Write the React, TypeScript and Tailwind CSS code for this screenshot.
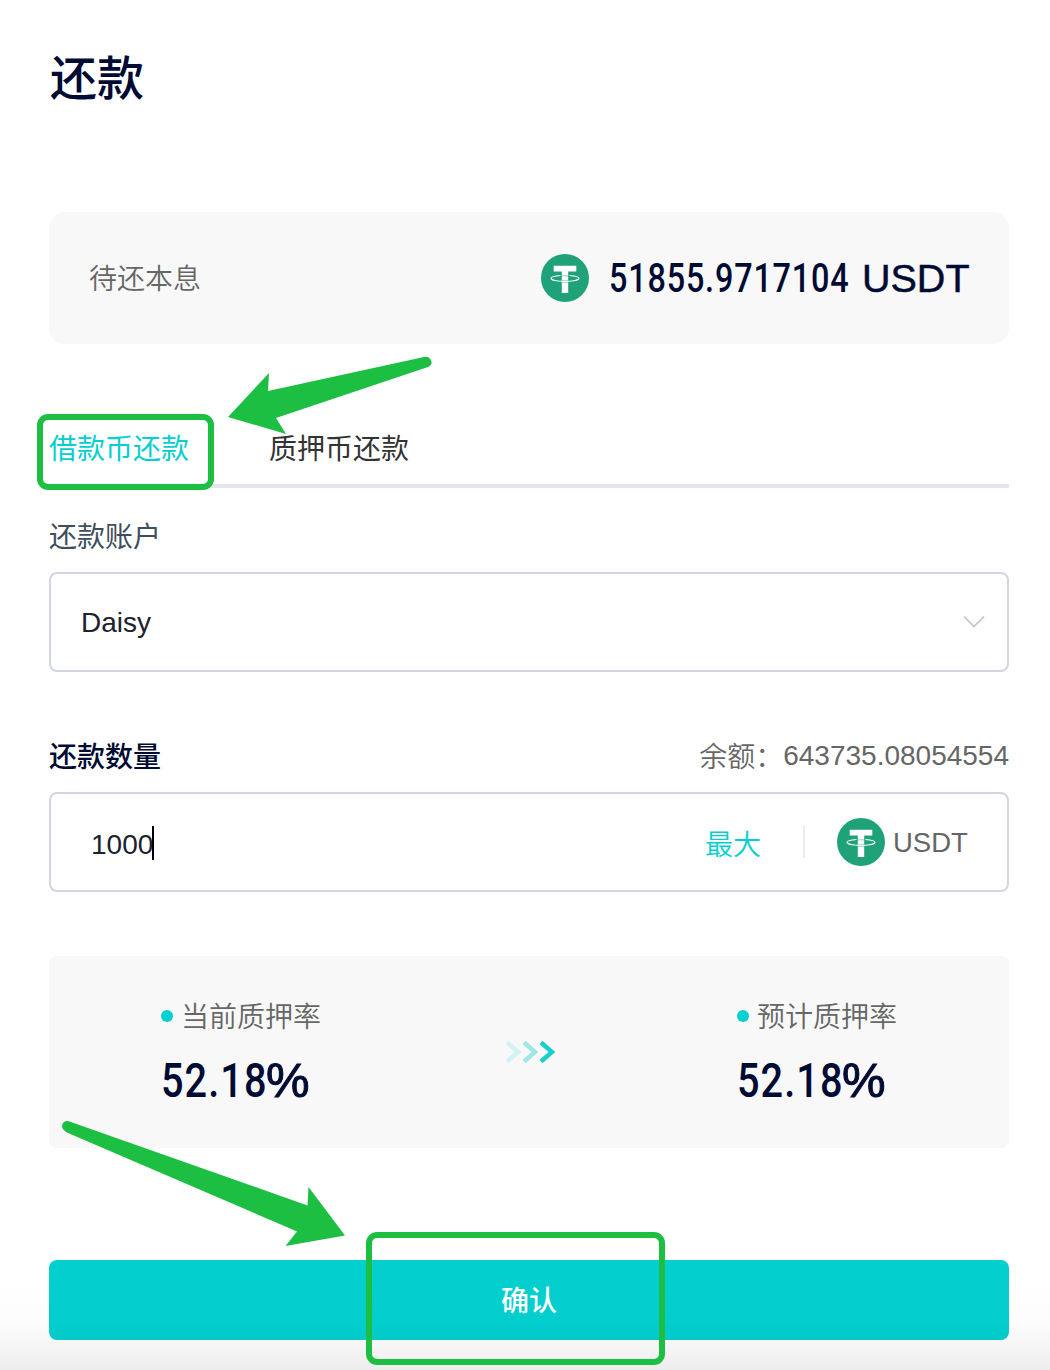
import React from "react";

function TetherIcon() {
  return (
    <svg viewBox="0 0 48 48" className="block size-12 shrink-0">
      <circle cx="24" cy="24" r="24" fill="#1fa27a" />
      <path d="M19.500 21.500C13.800 21.900 10 23 10 24.300C10 26 16.300 27.300 24 27.300C31.700 27.300 38 26 38 24.300C38 23 34.200 21.900 28.500 21.500" fill="none" stroke="#fff" strokeWidth="1.1" />
      <path d="M12.700 11.800H35.300V17.500H27.200V39H20.800V17.500H12.700Z" fill="#fff" />
      <path d="M20.800 22C23 21.700 25 21.700 27.200 22" fill="none" stroke="#1fa27a" strokeWidth="0.5" />
      <path d="M20.800 26.300C23 26.500 25 26.500 27.200 26.300M20.800 28.300C23 28.500 25 28.500 27.200 28.300" fill="none" stroke="#1fa27a" strokeWidth="0.4" />
    </svg>
  );
}

function Rate({ label, value }: { label: string; value: string }) {
  return (
    <div className="w-[200px]">
      <div className="flex h-10 items-center">
        <span className="size-3 rounded-full bg-[#04cfcf]" />
        <span className="ml-2 pt-1 text-[28px] font-[350] leading-10 whitespace-nowrap text-[#666]">{label}</span>
      </div>
      <div className="mt-4 flex h-14 items-center text-[49px] leading-[56px] text-[#000b33]">
        <span className="w-[105px] pt-0.5 font-['Roboto',sans-serif] font-medium">
          <span className="inline-block origin-left scale-x-[0.81] tracking-[1.3px]">{value}</span>
        </span>
        <span className="[-webkit-text-stroke:1px_#000b33]">%</span>
      </div>
    </div>
  );
}

export default function App() {
  return (
    <div className="relative flex h-[1370px] w-[1050px] flex-col overflow-hidden bg-white pr-[41px] pl-[49px] font-['Liberation_Sans','Noto_Sans_CJK_SC',sans-serif] text-[28px] leading-10">
      <h1 className="mt-[46px] h-[66px] pl-px text-[47px] leading-[66px] font-medium text-[#000b33]">还款</h1>

      <section className="mt-[100px] flex h-[132px] items-center rounded-2xl bg-[#f8f8f8] px-10">
        <span className="pt-1 font-[350] text-[#666]">待还本息</span>
        <div className="ml-auto flex items-center text-[40px] text-[#000b33]">
          <TetherIcon />
          <span className="ml-5 w-[253px] pt-0.5 font-['Roboto',sans-serif] text-[40px] font-medium whitespace-nowrap">
            <span className="inline-block origin-left scale-x-[0.81] tracking-[1px]">51855.9717104</span>
          </span>
          <span className="w-[107px] text-[39.5px] [-webkit-text-stroke:0.5px_#000b33]">USDT</span>
        </div>
      </section>

      <nav className="mt-[72px] flex h-[72px] gap-20 border-b-4 border-[#e4e6ee] pt-3.5">
        <span className="text-[#04cfcf]">借款币还款</span>
        <span className="text-[#333]">质押币还款</span>
      </nav>

      <label className="mt-[30px] text-[#404d5c]">还款账户</label>
      <div className="mt-3.5 flex h-[100px] shrink-0 items-center justify-between rounded-lg border-2 border-[#d3d6e1] pr-[22px] pl-[30px] text-[#1b212d]">
        <span className="pt-0.5">Daisy</span>
        <svg viewBox="0 0 22 14" className="h-3.5 w-[22px]" fill="none" stroke="#c0c4cc" strokeWidth="1.7">
          <path d="M1 1.500L11 11.500L21 1.500" />
        </svg>
      </div>

      <div className="mt-16 flex h-10 items-center justify-between">
        <span className="pt-1 font-medium text-[#000b33]">还款数量</span>
        <span className="flex font-[350] text-[#666]">
          <span className="pt-1">余额：</span>
          <span className="pt-0.5">643735.08054554</span>
        </span>
      </div>
      <div className="mt-4 flex h-[100px] shrink-0 items-center rounded-lg border-2 border-[#d3d6e1] pr-10 pl-10 text-[#1b212d]">
        <span className="pt-1.5">1000</span>
        <span className="-ml-px h-[34px] w-0.5 translate-y-px bg-black" />
        <span className="ml-auto pt-2 font-[350] text-[#04cfcf]">最大</span>
        <span className="mr-8 ml-[42px] h-8 w-0.5 bg-[#ededed]" />
        <TetherIcon />
        <span className="ml-2 w-[74px] pt-0.5 text-[27.5px] text-[#666]">USDT</span>
      </div>

      <section className="mt-16 flex h-48 shrink-0 items-start rounded-lg bg-[#f8f8f8] pt-10 pl-28">
        <Rate label="当前质押率" value="52.18" />
        <svg viewBox="0 0 52 24" className="mt-11 ml-[143px] h-6 w-[52px]" fill="none" strokeWidth="4.4">
          <path d="M3 2.500L14 12L3 21.500" stroke="#d3f2f2" />
          <path d="M20 2.500L31 12L20 21.500" stroke="#9ee7e6" />
          <path d="M37 2.500L48 12L37 21.500" stroke="#18cecd" />
        </svg>
        <div className="ml-[181px]">
          <Rate label="预计质押率" value="52.18" />
        </div>
      </section>

      <button className="mt-28 h-20 shrink-0 rounded-lg bg-[#04cfcf] pt-1 font-medium text-white">确认</button>

      <div className="pointer-events-none absolute inset-x-0 bottom-0 h-[90px] bg-linear-to-b from-black/0 via-black/[0.012] via-50% to-black/[0.07]" />
      <div className="pointer-events-none absolute top-[414px] left-[37px] h-[76px] w-[177px] rounded-[11px] border-6 border-[#1dbf43]" />
      <div className="pointer-events-none absolute top-[1232px] left-[366px] h-[133px] w-[299px] rounded-[11px] border-6 border-[#1dbf43]" />
      <svg viewBox="0 0 206 80" className="pointer-events-none absolute top-[355px] left-[227px] h-20 w-[206px]" fill="#1dbf43">
        <path d="M1 62L42 18L41 36L197 2Q203 1 204.500 7Q205 10 201 12L49 63L59 79Z" />
      </svg>
      <svg viewBox="0 0 286 128" className="pointer-events-none absolute top-[1119px] left-[61px] h-32 w-[286px]" fill="#1dbf43">
        <path d="M284 116.500L247.500 68L246.500 86.500L7 2Q2 1.500 1 7Q1 11 7 14L236 112.500L224.500 127Z" />
      </svg>
    </div>
  );
}
